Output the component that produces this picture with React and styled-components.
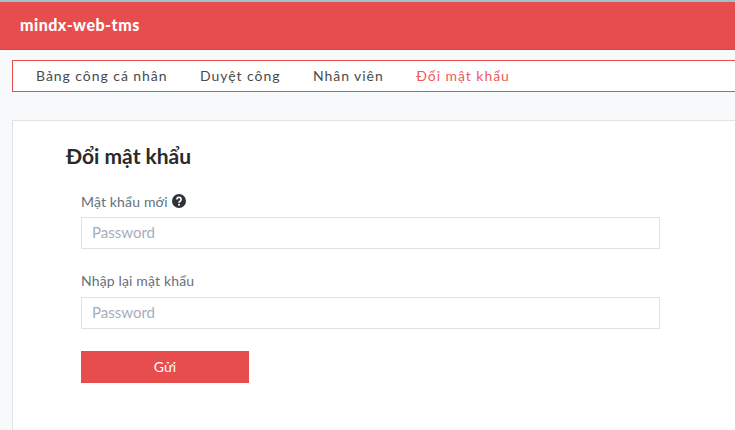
import React from "react"
import styled, { createGlobalStyle } from "styled-components"

const GlobalStyle = createGlobalStyle`
  html, body {
    margin: 0;
    height: 100%;
    overflow: hidden;
    background-color: #f8f9fb;
    font-family: "Lato", "Open Sans", sans-serif;
  }
`

const Page = styled.div`
  width: 735px;
  height: 430px;
  overflow: hidden;
`
const Header = styled.header`
  height: 45px;
  display: flex;
  align-items: center;
  padding: 0 0 2px 20px;
  background-color: #e84d4d;
  border-top: 2px solid #9cc4cc;
  border-bottom: 1px solid #d94444;
`
const Brand = styled.span`
  font-size: 16px;
  font-weight: 900;
  letter-spacing: 0.5px;
  color: #ffffff;
`
const Nav = styled.nav`
  display: flex;
  align-items: center;
  gap: 32.5px;
  width: 760px;
  height: 32px;
  margin: 10px 0 0 12px;
  padding: 0 0 2px 23px;
  box-sizing: border-box;
  background-color: #ffffff;
  border: 1px solid #e84d4d;
`
const NavItem = styled.a`
  font-size: 14px;
  letter-spacing: 0.95px;
  color: ${(props) => (props.$active ? "#ee5a5a" : "#4a4a4a")};
`
const Card = styled.main`
  width: 760px;
  height: 320px;
  margin: 28px 0 0 12px;
  padding: 22px 0 0 53px;
  box-sizing: border-box;
  background-color: #ffffff;
  border: 1px solid #e2e2e2;
`
const Title = styled.h2`
  margin: 0 0 22px;
  font-size: 21px;
  line-height: 26px;
  font-weight: 700;
  color: #2a2a2a;
`
const Form = styled.form`
  width: 579px;
  margin-left: 15px;
`
const Field = styled.div`
  margin-bottom: 22px;
`
const Label = styled.label`
  display: flex;
  align-items: center;
  gap: 4px;
  height: 20px;
  margin-bottom: 6px;
  padding-bottom: ${(props) => (props.$raised ? "2px" : "0")};
  box-sizing: border-box;
  font-size: 14px;
  letter-spacing: 0.15px;
  color: #66707c;
`
const Input = styled.input`
  display: block;
  width: 100%;
  height: 32px;
  padding: 0 10px 3px;
  box-sizing: border-box;
  font-family: inherit;
  font-size: 15px;
  background-color: #ffffff;
  border: 1px solid #dfe1e3;
  outline: none;
  &::placeholder {
    color: #a4aebd;
    opacity: 1;
  }
`
const Button = styled.button`
  display: block;
  width: 168px;
  height: 32px;
  margin-top: 22px;
  padding: 0 0 2px;
  font-family: inherit;
  font-size: 14px;
  color: #ffffff;
  background-color: #e84d4d;
  border: none;
`

function HelpIcon() {
  return (
    <svg width="14" height="14" viewBox="0 0 14 14">
      <circle cx="7" cy="7" r="7" fill="#2f3338" />
      <path d="M4.9 5.4a2.1 2.1 0 1 1 3.2 1.8c-.8.5-1.1.8-1.1 1.6" fill="none" stroke="#fff" strokeWidth="1.7" />
      <circle cx="7" cy="10.8" r="1" fill="#fff" />
    </svg>
  )
}

export default function App() {
  return (
    <Page>
      <GlobalStyle />
      <Header>
        <Brand>mindx-web-tms</Brand>
      </Header>
      <Nav>
        <NavItem>Bảng công cá nhân</NavItem>
        <NavItem>Duyệt công</NavItem>
        <NavItem>Nhân viên</NavItem>
        <NavItem $active>Đổi mật khẩu</NavItem>
      </Nav>
      <Card>
        <Title>Đổi mật khẩu</Title>
        <Form>
          <Field>
            <Label>Mật khẩu mới <HelpIcon /></Label>
            <Input type="password" placeholder="Password" />
          </Field>
          <Field>
            <Label $raised>Nhập lại mật khẩu</Label>
            <Input type="password" placeholder="Password" />
          </Field>
          <Button type="button">Gửi</Button>
        </Form>
      </Card>
    </Page>
  )
}
